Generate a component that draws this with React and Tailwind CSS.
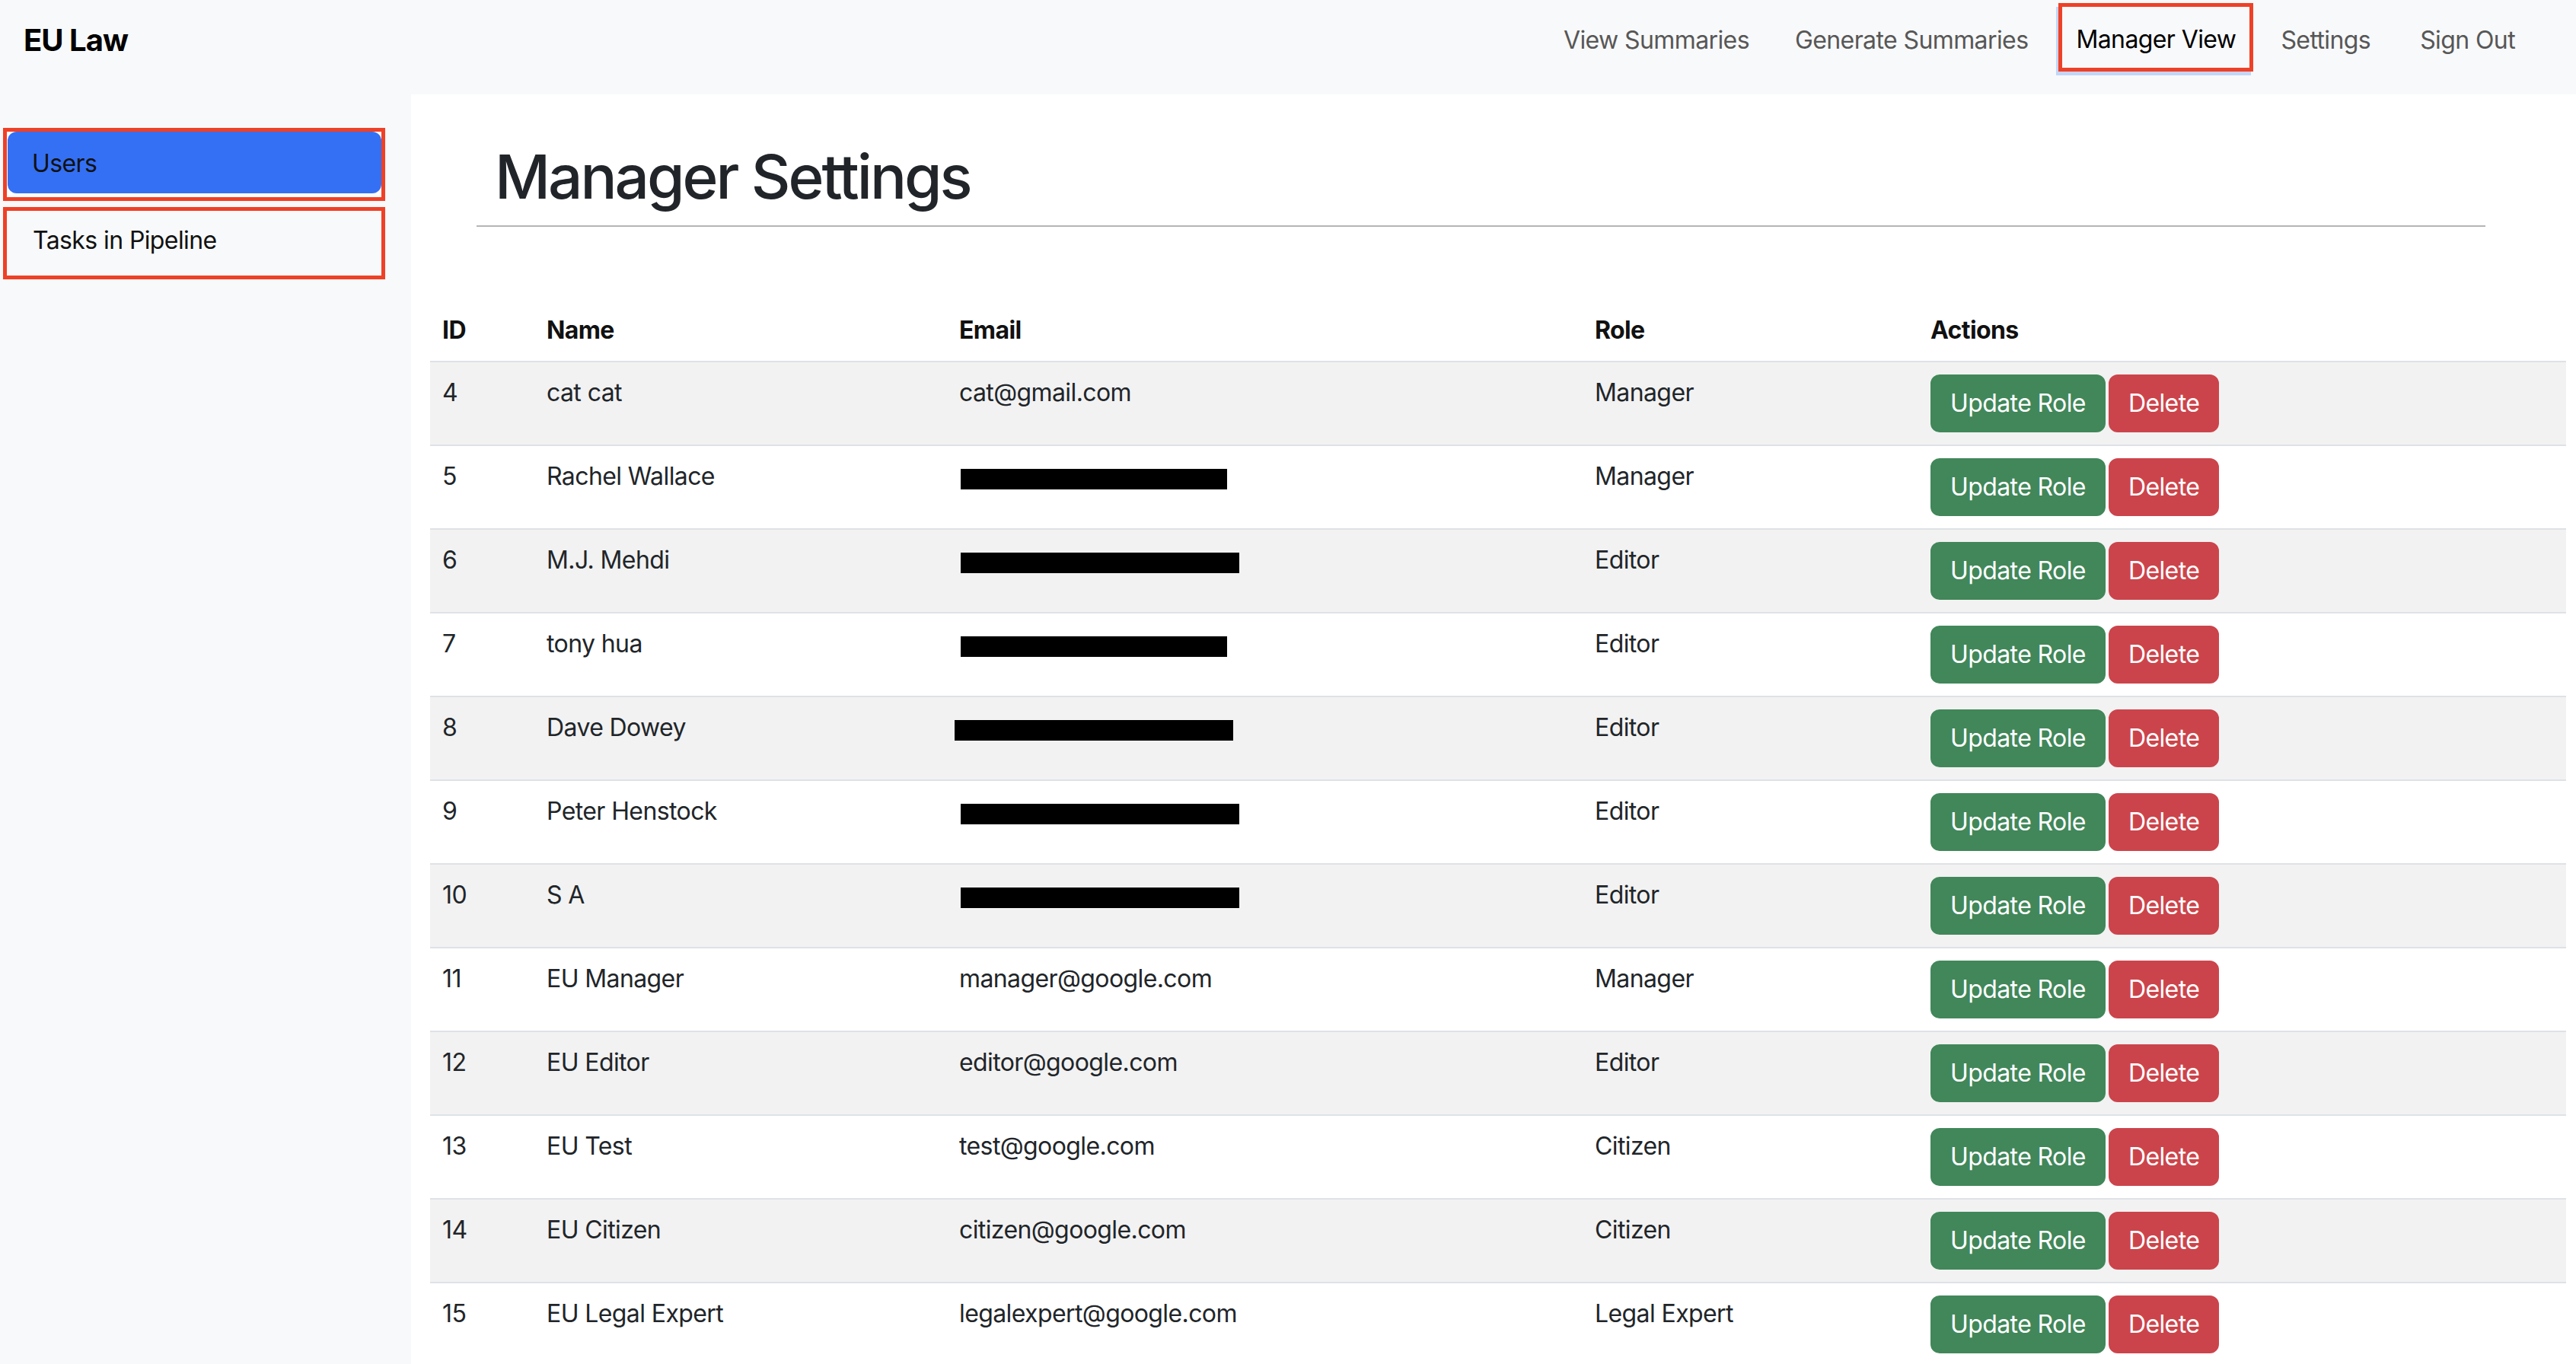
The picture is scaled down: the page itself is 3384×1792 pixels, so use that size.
import React from 'react';

const users = [
    { id: 4, name: 'cat cat', email: 'cat@gmail.com', role: 'Manager' },
    { id: 5, name: 'Rachel Wallace', bar: { w: 350, x: 2 }, role: 'Manager' },
    { id: 6, name: 'M.J. Mehdi', bar: { w: 366, x: 2 }, role: 'Editor' },
    { id: 7, name: 'tony hua', bar: { w: 350, x: 2 }, role: 'Editor' },
    { id: 8, name: 'Dave Dowey', bar: { w: 366, x: -6 }, role: 'Editor' },
    { id: 9, name: 'Peter Henstock', bar: { w: 366, x: 2 }, role: 'Editor' },
    { id: 10, name: 'S A', bar: { w: 366, x: 2 }, role: 'Editor' },
    { id: 11, name: 'EU Manager', email: 'manager@google.com', role: 'Manager' },
    { id: 12, name: 'EU Editor', email: 'editor@google.com', role: 'Editor' },
    { id: 13, name: 'EU Test', email: 'test@google.com', role: 'Citizen' },
    { id: 14, name: 'EU Citizen', email: 'citizen@google.com', role: 'Citizen' },
    { id: 15, name: 'EU Legal Expert', email: 'legalexpert@google.com', role: 'Legal Expert' },
];

const Navbar = () => (
    <nav className="h-[124px] flex items-center justify-between pl-[31px] pr-[80px] pb-[18px]">
        <span className="text-[40px] font-bold text-black leading-none tracking-[-1px]">EU Law</span>
        <div className="flex items-center text-[#575757]">
            <span>View Summaries</span>
            <span className="ml-[60px]">Generate Summaries</span>
            {/* active link, boxed */}
            <span className="ml-[40px] mb-[8px] h-[90px] pt-[6px] flex items-center px-[18px] border-[5px] border-[#ee4127] text-black shadow-[-3px_5px_0_0_#c3d6f7]">
                Manager View
            </span>
            <span className="ml-[36px]">Settings</span>
            <span className="ml-[65px]">Sign Out</span>
        </div>
    </nav>
);

const Sidebar = () => (
    <aside className="w-[540px] shrink-0 pt-[44px] pl-[4px]">
        <div className="w-[502px] h-[96px] border-[5px] border-[#ee4127] bg-white pl-[1px] pb-[5px]">
            <div className="h-full rounded-[12px] bg-[#3470f4] flex items-center pl-[32px] pt-[2px] text-[#111]">
                Users
            </div>
        </div>
        <div className="mt-[8px] w-[502px] h-[95px] border-[5px] border-[#ee4127] flex items-center pl-[34px] pb-[8px] text-[#111]">
            Tasks in Pipeline
        </div>
    </aside>
);

const UserRow = ({ user, index }) => (
    <tr className={index % 2 === 0 ? 'bg-[#f2f2f2]' : 'bg-white'}>
        <td className="px-[16px] py-[16px] align-top border-b-2 border-[#dee2e6]">{user.id}</td>
        <td className="px-[16px] py-[16px] align-top border-b-2 border-[#dee2e6]">{user.name}</td>
        <td className="px-[16px] py-[16px] align-top border-b-2 border-[#dee2e6]">
            {user.email ? (
                user.email
            ) : (
                <div className="h-[27px] mt-[14px] bg-black" style={{ width: user.bar.w, marginLeft: user.bar.x }} />
            )}
        </td>
        <td className="px-[16px] py-[16px] align-top border-b-2 border-[#dee2e6]">{user.role}</td>
        <td className="px-[16px] py-[16px] align-top border-b-2 border-[#dee2e6]">
            <div className="flex">
                <button className="h-[76px] px-[24px] rounded-[12px] bg-[#41875a] border-2 border-[#41875a] text-white leading-[48px]">
                    Update Role
                </button>
                <button className="ml-[4px] h-[76px] px-[24px] rounded-[12px] bg-[#cc444b] border-2 border-[#cc444b] text-white leading-[48px]">
                    Delete
                </button>
            </div>
        </td>
    </tr>
);

const App = () => {
    return (
        <div className="w-[3384px] h-[1792px] overflow-hidden bg-[#f8f9fa] text-[32px] leading-[48px] tracking-[-0.6px] text-[#212529] font-['Inter','Liberation_Sans',sans-serif]">
            <Navbar />

            <div className="flex h-[1668px]">
                <Sidebar />

                <main className="flex-1 bg-white overflow-hidden">
                    <div className="ml-[86px] mr-[119px] pt-[60px]">
                        <h1 className="pl-[24px] text-[80px] leading-[96px] font-medium tracking-[-3px] mb-[16px]">Manager Settings</h1>
                        <hr className="border-0 h-[2px] bg-[#b5b5b5]" />
                    </div>

                    <table className="mt-[96px] ml-[25px] w-[2806px] table-fixed border-collapse">
                        <thead>
                            <tr className="text-left text-[#111]">
                                <th className="w-[137px] px-[16px] py-[16px] font-bold border-b-2 border-[#dee2e6]">ID</th>
                                <th className="w-[542px] px-[16px] py-[16px] font-bold border-b-2 border-[#dee2e6]">Name</th>
                                <th className="w-[835px] px-[16px] py-[16px] font-bold border-b-2 border-[#dee2e6]">Email</th>
                                <th className="w-[441px] px-[16px] py-[16px] font-bold border-b-2 border-[#dee2e6]">Role</th>
                                <th className="px-[16px] py-[16px] font-bold border-b-2 border-[#dee2e6]">Actions</th>
                            </tr>
                        </thead>
                        <tbody>
                            {users.map((user, index) => (
                                <UserRow key={user.id} user={user} index={index} />
                            ))}
                        </tbody>
                    </table>
                </main>
            </div>
        </div>
    );
};

export default App;
